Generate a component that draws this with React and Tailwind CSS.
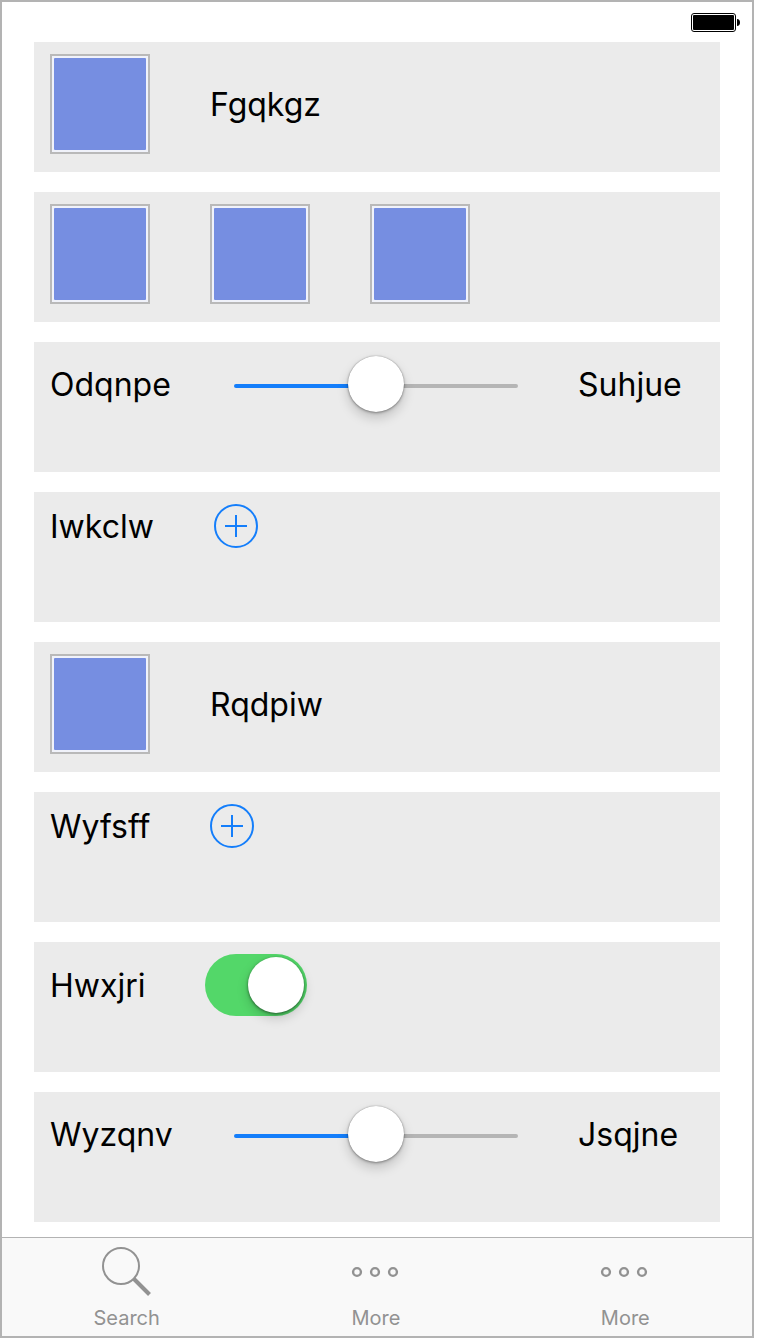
import { useState } from "react";

function Row({ children }) {
  return (
    <section className="flex h-[130px] items-start bg-[#ebebeb] px-4 pt-3">
      <div className="flex min-w-0 flex-1 items-center gap-[60px]">{children}</div>
    </section>
  );
}

function Label({ children, className = "", ...rest }) {
  return (
    <label className={`pt-0.5 text-[32px] leading-10 whitespace-nowrap ${className}`} {...rest}>
      {children}
    </label>
  );
}

function Tile() {
  return (
    <div className="size-[100px] shrink-0 border-2 border-[#b9b9b9] bg-[#f0f2fa] p-0.5">
      <div className="size-full rounded-[1px] bg-[#768ee1]" />
    </div>
  );
}

function Slider({ id }) {
  const [value, setValue] = useState(50);
  return (
    <input
      id={id}
      type="range"
      min="0"
      max="100"
      value={value}
      onChange={(e) => setValue(Number(e.target.value))}
      style={{ "--fill": `${value}%` }}
      className="h-[60px] w-[284px] appearance-none bg-transparent pt-1 [&::-webkit-slider-runnable-track]:h-1 [&::-webkit-slider-runnable-track]:rounded-full [&::-webkit-slider-runnable-track]:bg-[linear-gradient(to_right,#147efb_var(--fill),#b5b5b5_var(--fill))] [&::-webkit-slider-thumb]:-mt-7 [&::-webkit-slider-thumb]:size-14 [&::-webkit-slider-thumb]:appearance-none [&::-webkit-slider-thumb]:rounded-full [&::-webkit-slider-thumb]:bg-white [&::-webkit-slider-thumb]:shadow-[0_0_1px_rgba(0,0,0,0.4),0_1px_3px_rgba(0,0,0,0.35),0_6px_12px_rgba(0,0,0,0.18)]"
    />
  );
}

function Switch({ id }) {
  return (
    <input
      id={id}
      type="checkbox"
      role="switch"
      defaultChecked
      className="flex h-[62px] w-[102px] shrink-0 appearance-none rounded-full bg-[#c7c7cc] p-[3px] before:block before:size-14 before:rounded-full before:bg-white before:shadow-[0_1px_3px_rgba(0,0,0,0.5),0_5px_12px_rgba(0,0,0,0.18)] checked:justify-end checked:bg-[#53d769]"
    />
  );
}

function AddButton({ label }) {
  return (
    <button type="button" aria-label={label} className="size-11 shrink-0 text-[#147efb]">
      <svg viewBox="0 0 44 44" className="size-full" fill="none" stroke="currentColor" strokeWidth="2">
        <circle cx="22" cy="22" r="21" />
        <path d="M22 11v22M11 22h22" />
      </svg>
    </button>
  );
}

function Battery() {
  return (
    <svg viewBox="0 0 50 20" className="h-5 w-[50px]" role="img" aria-label="Battery full">
      <rect x="0.5" y="0.5" width="44" height="18" rx="2.5" fill="none" stroke="#000" />
      <rect x="2" y="2" width="41" height="15" rx="1" fill="#000" />
      <path d="M46 6c2 0 3 1.5 3 3.5S48 13 46 13z" fill="#000" />
    </svg>
  );
}

function SearchIcon() {
  return (
    <svg viewBox="0 0 50 50" className="size-[50px]" fill="none" stroke="currentColor" aria-hidden="true">
      <circle cx="19" cy="19" r="18" strokeWidth="2" />
      <path d="M31.5 31.5L47.5 47.5" strokeWidth="4" />
    </svg>
  );
}

function MoreIcon() {
  return (
    <svg viewBox="0 0 50 50" className="size-[50px]" fill="none" stroke="currentColor" strokeWidth="2.4" aria-hidden="true">
      <circle cx="6" cy="25" r="3.9" />
      <circle cx="24" cy="25" r="3.9" />
      <circle cx="42" cy="25" r="3.9" />
    </svg>
  );
}

function Tab({ icon, children }) {
  return (
    <a href="#" className="flex flex-1 flex-col items-center gap-[7px] pt-[9px] pb-1 text-[20px] leading-7 text-[#929292]">
      {icon}
      {children}
    </a>
  );
}

export default function App() {
  return (
    <div className="pr-1.5 font-['Inter','Liberation_Sans',sans-serif] text-black">
      <div className="border-2 border-[#b3b3b3] bg-white">
        <header className="flex h-10 items-start justify-end pt-[11px] pr-[11px]">
          <Battery />
        </header>
        <main className="flex flex-col gap-5 px-8 pb-[15px]">
          <Row>
            <Tile />
            <Label>Fgqkgz</Label>
          </Row>
          <Row>
            <Tile />
            <Tile />
            <Tile />
          </Row>
          <Row>
            <Label htmlFor="slider-a" className="min-w-[124px]">Odqnpe</Label>
            <Slider id="slider-a" />
            <Label htmlFor="slider-a">Suhjue</Label>
          </Row>
          <Row>
            <Label>Iwkclw</Label>
            <AddButton label="Iwkclw" />
          </Row>
          <Row>
            <Tile />
            <Label>Rqdpiw</Label>
          </Row>
          <Row>
            <Label>Wyfsff</Label>
            <AddButton label="Wyfsff" />
          </Row>
          <Row>
            <Label htmlFor="switch-a">Hwxjri</Label>
            <Switch id="switch-a" />
          </Row>
          <Row>
            <Label htmlFor="slider-b" className="min-w-[124px]">Wyzqnv</Label>
            <Slider id="slider-b" />
            <Label htmlFor="slider-b">Jsqjne</Label>
          </Row>
        </main>
        <nav className="flex border-t border-[#b3b3b3] bg-[#f9f9f9] pr-0.5">
          <Tab icon={<SearchIcon />}>Search</Tab>
          <Tab icon={<MoreIcon />}>More</Tab>
          <Tab icon={<MoreIcon />}>More</Tab>
        </nav>
      </div>
    </div>
  );
}
